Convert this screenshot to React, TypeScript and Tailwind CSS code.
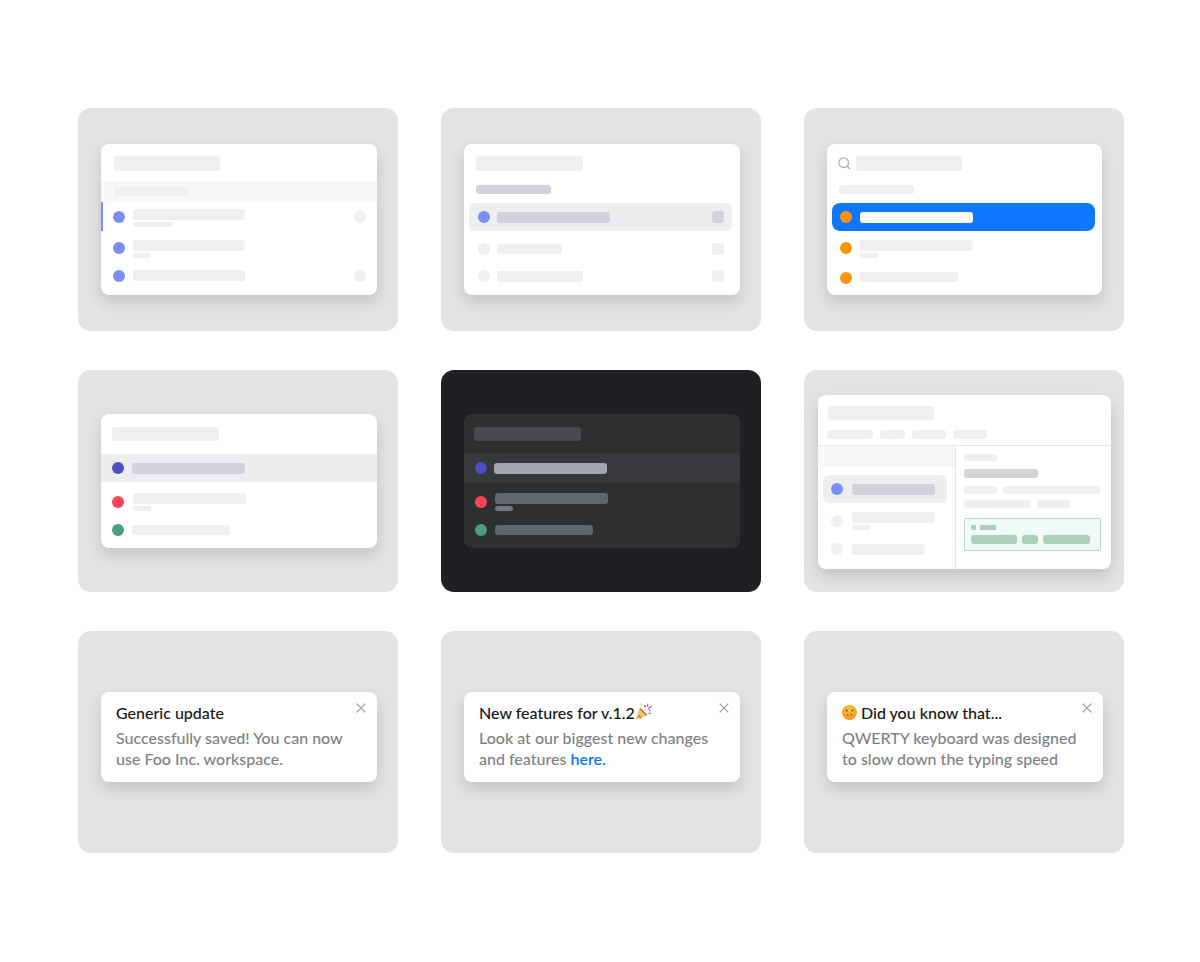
import type { ReactNode } from "react";

const Bar = ({ className }: { className: string }) => <div className={`rounded-[3px] ${className}`} />;
const Dot = ({ className }: { className: string }) => <div className={`w-3 h-3 rounded-full shrink-0 ${className}`} />;

function Tile({ children, dark, className = "items-center" }: { children: ReactNode; dark?: boolean; className?: string }) {
  return (
    <div className={`flex pl-[23px] rounded-[13px] ${dark ? "bg-[#1f2023]" : "bg-[#e3e3e3]"} ${className}`}>
      {children}
    </div>
  );
}

const cardShadow = "shadow-[0_7px_15px_rgba(0,0,0,0.14)]";

// Close cross on the notification cards
function Close() {
  return (
    <svg className="absolute right-[11px] top-[11px]" width="10" height="10" viewBox="0 0 10 10" fill="none" stroke="#9b9b9b" strokeWidth="1.2">
      <path d="M0.7 0.7 9.3 9.3M9.3 0.7 0.7 9.3" />
    </svg>
  );
}

function PartyPopper() {
  return (
    <svg className="-mt-[3px] shrink-0" width="17" height="17" viewBox="0 0 17 17">
      <path d="M1 16.5 L5 4.5 L12.5 12 Z" fill="#f6c36a" />
      <path d="M3 11 L7.5 15 L5 15.8 L2.2 13 Z" fill="#d9913f" />
      <path d="M4.6 6 L5 4.5 L12.5 12 L10.8 12.7 Z" fill="#b97a35" />
      <circle cx="10" cy="3.2" r="1.1" fill="#e2557b" />
      <circle cx="14.8" cy="7.5" r="1.1" fill="#5aa6e8" />
      <circle cx="6.5" cy="1.5" r="1" fill="#f2c94c" />
      <path d="M12.5 0.8 12.8 4M16.4 3.2 13 6M16 11 13.6 9.8" stroke="#e2557b" strokeWidth="1.2" fill="none" />
    </svg>
  );
}

function ShushFace() {
  return (
    <svg className="shrink-0" width="15" height="15" viewBox="0 0 15 15">
      <defs>
        <radialGradient id="shush" cx="50%" cy="35%" r="65%">
          <stop offset="0%" stopColor="#fccb4a" />
          <stop offset="100%" stopColor="#f3920f" />
        </radialGradient>
      </defs>
      <circle cx="7.5" cy="7.5" r="7.5" fill="url(#shush)" />
      <circle cx="4.8" cy="5.4" r="1" fill="#7a4a1c" />
      <circle cx="10.2" cy="5.4" r="1" fill="#7a4a1c" />
      <ellipse cx="7.5" cy="9.8" rx="2.8" ry="1.2" fill="#9a5a22" />
      <rect x="6.3" y="7.4" width="2.6" height="6.8" rx="1.3" fill="#f4a04a" />
    </svg>
  );
}

function Notification({ title, children }: { title: ReactNode; children: ReactNode }) {
  return (
    <div className={`relative w-[276px] h-[90px] mt-[61px] pl-[15px] pt-[10px] bg-white rounded-lg ${cardShadow}`}>
      <Close />
      <div className="text-[16px] leading-[21px] font-medium text-[#151515] flex items-center">{title}</div>
      <div className="text-[16px] leading-[21px] font-medium text-[#808184] mt-[4px]">{children}</div>
    </div>
  );
}

// Card with dots on the left, used for both the light and the dark tile
function StatusCard({ dark }: { dark?: boolean }) {
  const soft = dark ? "bg-[#63666c]" : "bg-[#efeff1]";
  return (
    <div className={`w-[276px] h-[134px] rounded-lg ${dark ? "bg-[#2e2f31]" : `bg-white ${cardShadow}`}`}>
      <div className={`pt-[13px] ${dark ? "pl-[10px]" : "pl-[11px]"}`}>
        <Bar className={`w-[107px] h-[14px] ${dark ? "bg-[#48494c]" : "bg-[#efeff1]"}`} />
      </div>
      <div className={`mt-[13px] h-[28px] pl-[11px] flex items-center ${dark ? "bg-[#37383c]" : "bg-[#edeef0]"}`}>
        <Dot className="bg-[#4a4fc4]" />
        <Bar className={`w-[113px] h-[11px] ${dark ? "ml-[7px] bg-[#a0a5b1]" : "ml-2 bg-[#d1d2db]"}`} />
      </div>
      <div className="flex pl-[11px] h-[39px]">
        <Dot className="mt-[14px] bg-[#fc4554]" />
        <div className={`mt-[11px] ${dark ? "ml-2" : "ml-[9px]"}`}>
          <Bar className={`w-[113px] h-[11px] ${soft}`} />
          <Bar className={`mt-[2px] w-[18px] h-[5px] ${dark ? "bg-[#74777d]" : "bg-[#efeff1]"}`} />
        </div>
      </div>
      <div className="flex pl-[11px]">
        <Dot className="mt-[3px] bg-[#4c9b82]" />
        <Bar className={`ml-2 mt-[4px] w-[98px] h-[10px] ${soft}`} />
      </div>
    </div>
  );
}

export default function App() {
  return (
    <div className="min-h-[962px] bg-white pt-[108px] pl-[78px] [font-family:Lato,'Noto_Sans',sans-serif]">
      <div className="grid grid-cols-[320px_320px_320px] grid-rows-[223px_222px_222px] gap-x-[43px] gap-y-[39px]">
        {/* Sectioned list with accent bar */}
        <Tile>
          <div className={`w-[276px] h-[151px] bg-white rounded-lg overflow-hidden ${cardShadow}`}>
            <Bar className="mt-3 ml-[13px] w-[106px] h-[15px] bg-[#efeff1]" />
            <div className="mt-[10px] h-[21px] pt-[6px] pl-[13px] bg-[#f7f7f9]">
              <Bar className="w-[74px] h-[9px] bg-[#efeff1]" />
            </div>
            <div className="flex h-[29px] pl-[10px] pr-[11px] border-l-2 border-[#7b8ef7]">
              <Dot className="mt-[9px] bg-[#7b8ef7]" />
              <div className="ml-2 mt-[7px]">
                <Bar className="w-[112px] h-[11px] bg-[#efeff1]" />
                <Bar className="mt-[2px] w-[39px] h-[5px] bg-[#efeff1]" />
              </div>
              <Dot className="ml-auto mt-[9px] bg-[#efefef]" />
            </div>
            <div className="flex h-[33px] pl-3 pr-[11px]">
              <Dot className="mt-[11px] bg-[#7b8ef7]" />
              <div className="ml-2 mt-[9px]">
                <Bar className="w-[112px] h-[11px] bg-[#efeff1]" />
                <Bar className="mt-[2px] w-[18px] h-[5px] bg-[#efeff1]" />
              </div>
            </div>
            <div className="flex pl-3 pr-[11px]">
              <Dot className="mt-[6px] bg-[#7b8ef7]" />
              <Bar className="ml-2 mt-[6px] w-[112px] h-[11px] bg-[#efeff1]" />
              <Dot className="ml-auto mt-[6px] bg-[#efefef]" />
            </div>
          </div>
        </Tile>

        {/* Rounded selection */}
        <Tile>
          <div className={`w-[276px] h-[151px] bg-white rounded-lg ${cardShadow}`}>
            <Bar className="mt-3 ml-3 w-[107px] h-[15px] bg-[#efeff1]" />
            <Bar className="mt-[14px] ml-3 w-[75px] h-[9px] bg-[#d1d2db]" />
            <div className="mt-[9px] ml-[5px] mr-2 h-[28px] pl-[9px] pr-2 flex items-center rounded-md bg-[#edeef0]">
              <Dot className="bg-[#7b8ef7]" />
              <Bar className="ml-[7px] w-[113px] h-[11px] bg-[#d1d2db]" />
              <Bar className="ml-auto w-3 h-3 bg-[#d1d2db]" />
            </div>
            <div className="mt-[12px] ml-[5px] mr-2 pl-[9px] pr-2 flex items-center">
              <Dot className="bg-[#efefef]" />
              <Bar className="ml-[7px] w-[65px] h-[10px] bg-[#efeff1]" />
              <Bar className="ml-auto w-3 h-3 bg-[#efeff1]" />
            </div>
            <div className="mt-[15px] ml-[5px] mr-2 pl-[9px] pr-2 flex items-center">
              <Dot className="bg-[#efefef]" />
              <Bar className="ml-[7px] w-[86px] h-[11px] bg-[#efeff1]" />
              <Bar className="ml-auto w-3 h-3 bg-[#efeff1]" />
            </div>
          </div>
        </Tile>

        {/* Search list */}
        <Tile>
          <div className={`w-[275px] h-[151px] bg-white rounded-lg ${cardShadow}`}>
            <div className="flex items-center pt-3 pl-[11px]">
              <svg width="13" height="13" viewBox="0 0 13 13" fill="none" stroke="#b4b4b4" strokeWidth="1.3">
                <circle cx="5.7" cy="5.7" r="4.8" />
                <path d="M9.2 9.2 12.3 12.3" />
              </svg>
              <Bar className="ml-[5px] w-[106px] h-[15px] bg-[#efeff1]" />
            </div>
            <Bar className="mt-[14px] ml-3 w-[75px] h-[9px] bg-[#efeff1]" />
            <div className="mt-[9px] ml-[5px] mr-[7px] h-[28px] pl-2 flex items-center rounded-lg bg-[#0d78ff]">
              <Dot className="bg-[#ff9408]" />
              <Bar className="ml-2 w-[113px] h-[11px] bg-white" />
            </div>
            <div className="flex mx-[5px] pl-2 h-[34px]">
              <Dot className="mt-[11px] bg-[#ff9408]" />
              <div className="ml-2 mt-[9px]">
                <Bar className="w-[113px] h-[11px] bg-[#efeff1]" />
                <Bar className="mt-[2px] w-[18px] h-[5px] bg-[#efeff1]" />
              </div>
            </div>
            <div className="flex mx-[5px] pl-2">
              <Dot className="mt-[7px] bg-[#ff9408]" />
              <Bar className="ml-2 mt-[7px] w-[98px] h-[10px] bg-[#efeff1]" />
            </div>
          </div>
        </Tile>

        <Tile>
          <StatusCard />
        </Tile>
        <Tile dark>
          <StatusCard dark />
        </Tile>

        {/* Two pane window */}
        <div className="pl-[14px] rounded-[13px] bg-[#e3e3e3]">
          <div className={`mt-[25px] w-[293px] h-[174px] bg-white rounded-lg overflow-hidden ${cardShadow}`}>
            <div className="h-[51px] pl-[9px] pt-[11px] border-b border-[#e8e8e8]">
              <Bar className="ml-px w-[106px] h-[14px] bg-[#efeff1]" />
              <div className="mt-[10px] flex gap-[7px]">
                <Bar className="w-[46px] h-[9px] bg-[#efeff1]" />
                <Bar className="w-[25px] h-[9px] bg-[#efeff1]" />
                <Bar className="w-[34px] h-[9px] bg-[#efeff1]" />
                <Bar className="w-[34px] h-[9px] bg-[#efeff1]" />
              </div>
            </div>
            <div className="flex">
              <div className="w-[138px] h-[123px] border-r border-[#e8e8e8]">
                <div className="h-[21px] bg-[#f7f7f9]" />
                <div className="mt-2 ml-[5px] mr-2 h-[28px] pl-2 flex items-center rounded-md bg-[#edeef0]">
                  <Dot className="bg-[#7b8ef7]" />
                  <Bar className="ml-[9px] w-[83px] h-[11px] bg-[#d1d2db]" />
                </div>
                <div className="flex pl-[13px] h-[32px]">
                  <Dot className="mt-3 bg-[#efefef]" />
                  <div className="ml-[9px] mt-[9px]">
                    <Bar className="w-[83px] h-[11px] bg-[#efeff1]" />
                    <Bar className="mt-[2px] w-[18px] h-[5px] bg-[#efeff1]" />
                  </div>
                </div>
                <div className="flex pl-[13px] mt-2">
                  <Dot className="bg-[#efefef]" />
                  <Bar className="ml-[9px] mt-px w-[73px] h-[11px] bg-[#efeff1]" />
                </div>
              </div>
              <div className="pl-2 pt-2">
                <Bar className="w-[33px] h-[7px] bg-[#efeff1]" />
                <Bar className="mt-2 w-[74px] h-[9px] bg-[#d5d5d5]" />
                <div className="mt-2 flex gap-[6px]">
                  <Bar className="w-[33px] h-[8px] bg-[#efeff1]" />
                  <Bar className="w-[97px] h-[8px] bg-[#efeff1]" />
                </div>
                <div className="mt-[6px] flex gap-[6px]">
                  <Bar className="w-[67px] h-[8px] bg-[#efeff1]" />
                  <Bar className="w-[33px] h-[8px] bg-[#efeff1]" />
                </div>
                <div className="mt-[10px] w-[137px] h-[33px] pl-[6px] pt-[6px] rounded-[2px] border border-[#b5d6c8] bg-[#f1faf6]">
                  <div className="flex items-center gap-1">
                    <Bar className="w-[5px] h-[5px] !rounded-[1px] bg-[#abd0bf]" />
                    <Bar className="w-4 h-[5px] !rounded-[1px] bg-[#abd0bf]" />
                  </div>
                  <div className="mt-[5px] flex gap-[5px]">
                    <Bar className="w-[46px] h-[9px] bg-[#abd0bf]" />
                    <Bar className="w-4 h-[9px] bg-[#abd0bf]" />
                    <Bar className="w-[47px] h-[9px] bg-[#abd0bf]" />
                  </div>
                </div>
              </div>
            </div>
          </div>
        </div>

        {/* Notifications */}
        <Tile className="items-start">
          <Notification title="Generic update">
            Successfully saved! You can now
            <br />
            use Foo Inc. workspace.
          </Notification>
        </Tile>
        <Tile className="items-start">
          <Notification title={<>New features for v.1.2<PartyPopper /></>}>
            Look at our biggest new changes
            <br />
            and features <span className="text-[#0d78ff] font-semibold">here.</span>
          </Notification>
        </Tile>
        <Tile className="items-start">
          <Notification title={<><ShushFace /><span className="ml-[4px]">Did you know that...</span></>}>
            QWERTY keyboard was designed
            <br />
            to slow down the typing speed
          </Notification>
        </Tile>
      </div>
    </div>
  );
}
